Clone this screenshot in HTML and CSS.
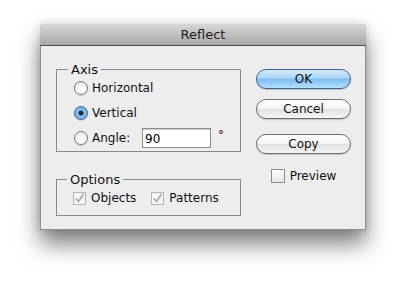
FILE: index.html
```html
<!DOCTYPE html>
<html lang="en">

<head>
  <meta charset="UTF-8">
  <title>Reflect</title>
  <link rel="stylesheet" href="styles.css">
</head>

<body>
  <div class="dialog">
    <div class="titlebar">Reflect</div>
    <div class="content">
      <div class="groups">
        <fieldset class="group axis">
          <legend>Axis</legend>
          <label class="row"><span class="radio"></span>Horizontal</label>
          <label class="row"><span class="radio checked"></span>Vertical</label>
          <div class="row">
            <span class="radio"></span><span class="angle-label">Angle:</span>
            <input class="angle-input" type="text" value="90">
            <span class="degree">°</span>
          </div>
        </fieldset>
        <fieldset class="group options">
          <legend>Options</legend>
          <div class="row">
            <label class="check-item">
              <svg class="check disabled" width="13" height="13" viewBox="0 0 13 13">
                <rect x="0.5" y="0.5" width="12" height="12" fill="#f3f3f3" stroke="#b4b4b4"/>
                <path d="M3 6.5 L5.5 9.5 L10.5 2" fill="none" stroke="#a9a9a9" stroke-width="1.6"/>
              </svg>Objects
            </label>
            <label class="check-item">
              <svg class="check disabled" width="13" height="13" viewBox="0 0 13 13">
                <rect x="0.5" y="0.5" width="12" height="12" fill="#f3f3f3" stroke="#b4b4b4"/>
                <path d="M3 6.5 L5.5 9.5 L10.5 2" fill="none" stroke="#a9a9a9" stroke-width="1.6"/>
              </svg>Patterns
            </label>
          </div>
        </fieldset>
      </div>
      <div class="buttons">
        <button class="btn default">OK</button>
        <button class="btn">Cancel</button>
        <button class="btn copy">Copy</button>
        <label class="check-item preview">
          <svg class="check" width="14" height="14" viewBox="0 0 14 14">
            <defs>
              <linearGradient id="box" x1="0" y1="0" x2="0" y2="1">
                <stop offset="0" stop-color="#ffffff"/>
                <stop offset="1" stop-color="#e4e4e4"/>
              </linearGradient>
            </defs>
            <rect x="0.5" y="0.5" width="13" height="13" fill="url(#box)" stroke="#8c8c8c"/>
          </svg>Preview
        </label>
      </div>
    </div>
  </div>
</body>

</html>
```

FILE: styles.css
```css
* {
  box-sizing: border-box;
}

html,
body {
  height: 100%;
}

body {
  margin: 0;
  padding: 24px 0 0 40px;
  background: #ffffff;
  font-family: 'DejaVu Sans', sans-serif;
  font-size: 12px;
  color: #111;
}

.dialog {
  width: 326px;
  height: 206px;
  background: #ededed;
  border: 1px solid #8e8e8e;
  border-top: none;
  border-radius: 4px 4px 0 0;
  box-shadow: 0 14px 22px rgba(0, 0, 0, 0.5), 0 0 8px rgba(0, 0, 0, 0.15);
}

.titlebar {
  height: 22px;
  line-height: 21px;
  text-align: center;
  font-size: 13px;
  color: #1a1a1a;
  background: linear-gradient(to bottom, #d8d8d8, #a8a8a8);
  border-bottom: 1px solid #505050;
  border-radius: 4px 4px 0 0;
  margin: 0 -1px;
}

.content {
  display: flex;
  justify-content: space-between;
  padding: 0 14px 0 15px;
}

.groups {
  width: 185px;
  padding-top: 16px;
}

.group {
  margin: 0;
  border: 1px solid #8a8a8a;
  padding: 1px 0 3px 17px;
  min-width: 0;
}

.group legend {
  padding: 0 3px;
  margin-left: -6px;
  line-height: 15px;
  font-size: 13px;
  color: #111;
}

.axis .row + .row {
  margin-top: 5px;
}

.row {
  display: flex;
  align-items: center;
  height: 20px;
}

.radio {
  width: 14px;
  height: 14px;
  border-radius: 50%;
  border: 1px solid #7c7c7c;
  background: radial-gradient(circle at 50% 70%, #ffffff 30%, #d9d9d9 100%);
  margin-right: 4px;
  box-shadow: 0 1px 1px rgba(0, 0, 0, 0.15);
}

.radio.checked {
  border-color: #3f6d9e;
  background: radial-gradient(circle, #1e2d3d 0 2px, #8dc4ee 3px, #4f9be0 100%);
}

.angle-label {
  width: 50px;
}

.angle-input {
  width: 69px;
  height: 20px;
  border: 1px solid #8c8c8c;
  box-shadow: inset 0 1px 1px rgba(0, 0, 0, 0.2);
  padding: 1px 2px 0;
  font-family: 'DejaVu Sans', sans-serif;
  font-size: 12px;
  color: #000;
  background: #fff;
  outline: none;
}

.degree {
  margin-left: 7px;
  margin-top: -6px;
}

.options {
  margin-top: 20px;
  padding: 1px 0 7px 16px;
}

.check-item {
  display: flex;
  align-items: center;
  gap: 5px;
}

.check-item + .check-item {
  margin-left: 15px;
}

.buttons {
  width: 95px;
  display: flex;
  flex-direction: column;
  padding-top: 23px;
}

.btn {
  height: 20px;
  border-radius: 10px;
  border: 1px solid #6e6e6e;
  background: linear-gradient(to bottom, #ffffff 0%, #f4f4f4 50%, #e2e2e2 51%, #f6f6f6 100%);
  font-family: 'DejaVu Sans', sans-serif;
  font-size: 12px;
  color: #111;
  padding: 0;
  margin-bottom: 10px;
  box-shadow: 0 1px 1px rgba(0, 0, 0, 0.18);
}

.btn.default {
  border-color: #3a6592;
  background: linear-gradient(to bottom, #d6ecfc 0%, #a9d4f7 45%, #7dbdf1 52%, #b5e0ff 100%);
}

.btn.copy {
  margin-top: 5px;
}

.preview {
  justify-content: center;
  margin-top: 5px;
}
```
